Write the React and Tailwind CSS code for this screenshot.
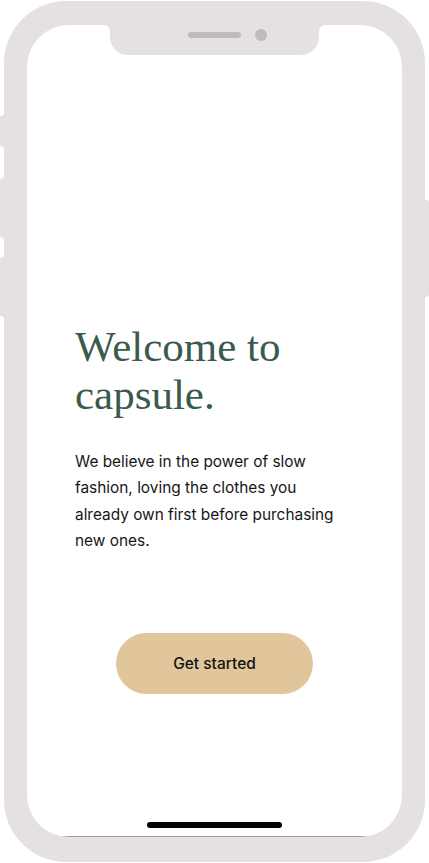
import React from 'react';

function SideButton({ className }) {
  return <div className={`absolute w-[6px] bg-[#e5e1e0] ${className}`} />;
}

export default function App() {
  return (
    <div className="relative w-[429px] h-[863px] bg-white overflow-hidden">
      {/* hardware buttons */}
      <SideButton className="left-0 top-[115px] h-[32px] rounded-l-[3px]" />
      <SideButton className="left-0 top-[178px] h-[60px] rounded-l-[3px]" />
      <SideButton className="left-0 top-[257px] h-[60px] rounded-l-[3px]" />
      <SideButton className="right-0 top-[200px] h-[97px] rounded-r-[3px]" />

      {/* frame */}
      <div className="relative ml-[4px] mt-[1px] w-[421px] h-[861px] rounded-[62px] bg-[#e5e1e0] pt-[24px] pb-[25px] px-[23px]">
        <div className="relative h-full rounded-[42px] bg-white overflow-hidden flex flex-col">
          {/* notch */}
          <div className="absolute left-[83px] top-0 w-[209px] h-[30px] bg-[#e5e1e0] rounded-b-[18px] flex items-center pl-[78px] pb-[10px] gap-[14px]">
            <div className="w-[53px] h-[6px] rounded-full bg-[#bdbcbb]" />
            <div className="w-[12px] h-[12px] rounded-full bg-[#bdbcbb]" />
          </div>
          <div className="absolute left-[77px] top-0 w-[6px] h-[6px] bg-[#e5e1e0]">
            <div className="w-full h-full bg-white rounded-tr-[6px]" />
          </div>
          <div className="absolute left-[292px] top-0 w-[6px] h-[6px] bg-[#e5e1e0]">
            <div className="w-full h-full bg-white rounded-tl-[6px]" />
          </div>

          <div className="pl-[48px] pr-[30px] pt-[298px]">
            <h1 className="font-['Liberation_Serif',serif] text-[43px] leading-[48px] text-[#3b5a4d]">
              Welcome to
              <br />
              capsule.
            </h1>
            <p className="mt-[30px] font-['Inter',sans-serif] text-[15.4px] leading-[26.3px] text-[#161616] whitespace-nowrap">
              We believe in the power of slow
              <br />
              fashion, loving the clothes you
              <br />
              already own first before purchasing
              <br />
              new ones.
            </p>
          </div>

          <div className="mt-[79px] flex justify-center">
            <button className="w-[197px] h-[61px] rounded-full bg-[#e1c69c] font-['Inter',sans-serif] text-[15.5px] font-medium text-[#111]">
              Get started
            </button>
          </div>

          <div className="mt-auto flex justify-center pb-[8px]">
            <div className="w-[135px] h-[6px] rounded-full bg-black" />
          </div>
          <div className="mx-[35px] h-px bg-[#9a9a9a]" />
        </div>
      </div>
    </div>
  );
}
